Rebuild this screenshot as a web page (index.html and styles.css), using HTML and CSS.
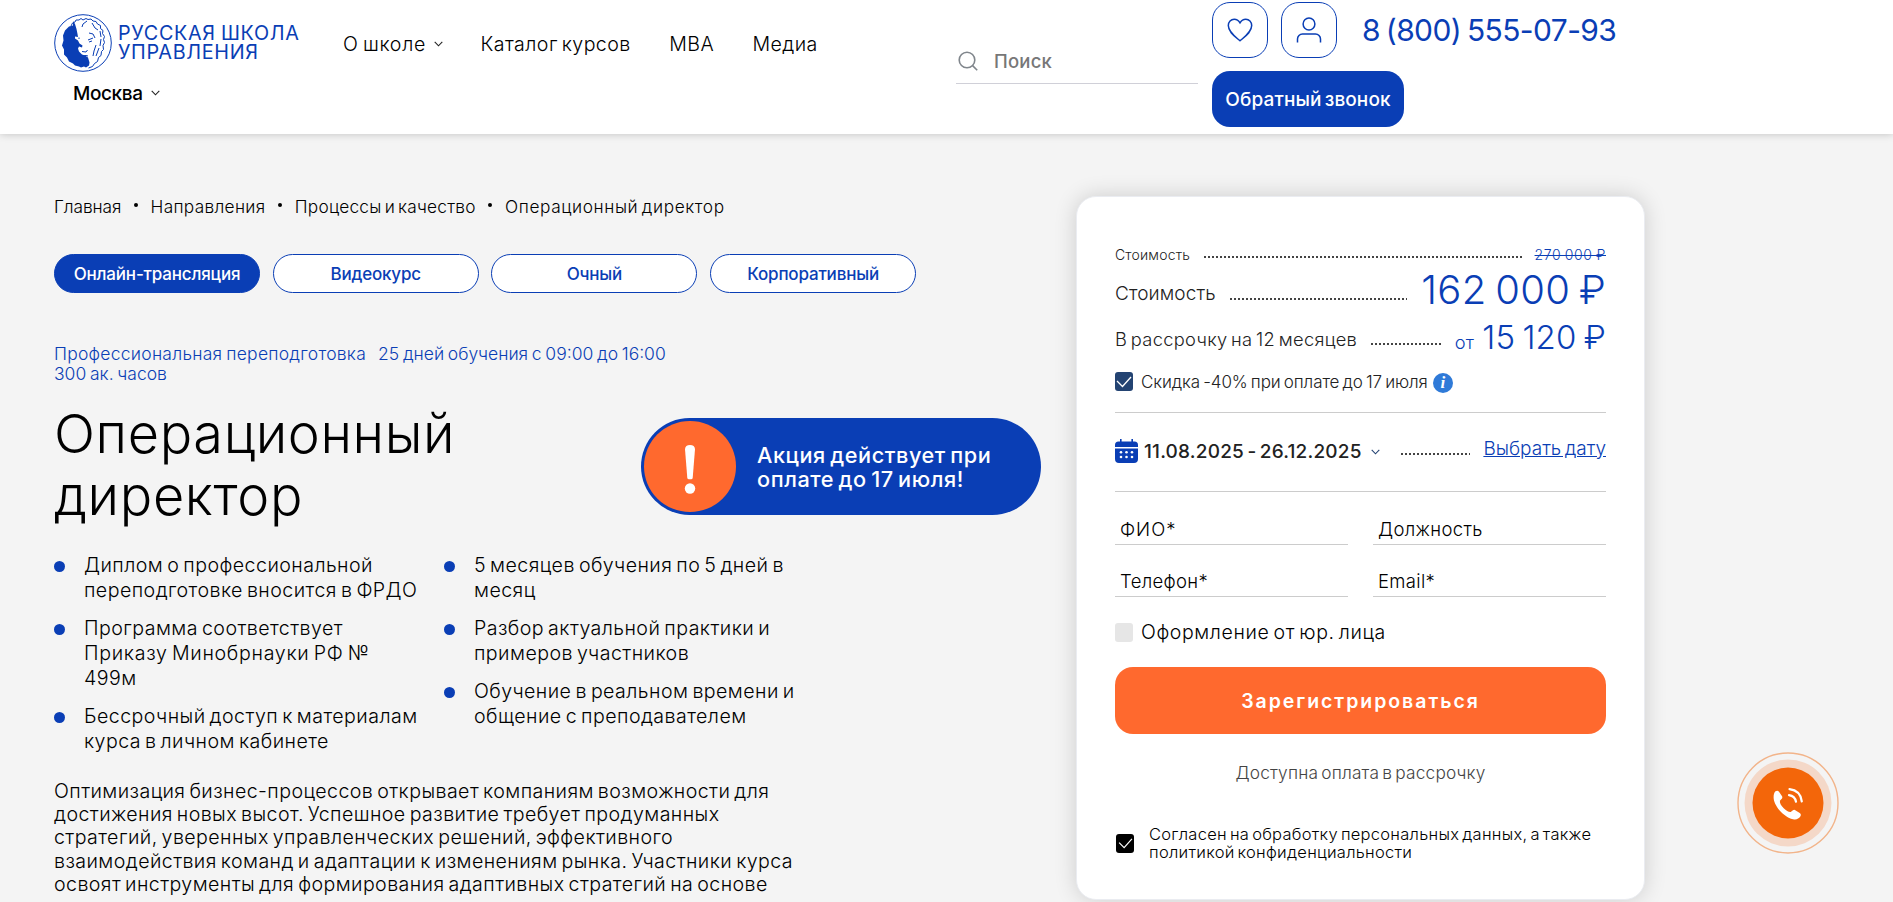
FILE: index.html
```html
<!DOCTYPE html>
<html lang="ru">
<head>
<meta charset="utf-8">
<title>Операционный директор</title>
<link rel="stylesheet" href="styles.css">
</head>
<body>
<header class="header">
  <div class="brand">
    <a class="logo">
      <svg class="logo-mark" viewBox="0 0 58 58" width="58" height="58">
        <circle cx="29" cy="29" r="28.3" fill="none" stroke="#0a3eb5" stroke-width="1"/>
        <path fill="#0a3eb5" d="M19 11.500l-4 1-4 4-2 5 .5 5-1.500 5 2 4 0 5 3 3 2 4 4 2 2 2 4 1 2 1 3-1 2 1 3-2 .5-3-1.500-5-3-2-3-1-3-3-1-3 1-2 3 1 .5-2-3-2-1.500-3-3-2 0-2 3 .5-.5-3-1-5-1.500-5-2-3z"/>
        <path fill="none" stroke="#0a3eb5" stroke-width="1" d="M17 12l1.500-3 2.500-1 1-2 3 0 2-1.500 2 1.500 3-1.500 2 1 3-.5 2 2 3 .5 1.500 2.500 3 1.500 0 3 2.500 2-.5 3 2 3-1 3 1 3-1.500 3 .5 4-2 2-.5 4-2.500 2-1 4-3 2-2 3-4 1.500M28 13l1-3 4-3M38 9l3 5 3 2M35 19l4 1 2 4M46 17l1 6M34 26l5-2M47 25l-1 7M35 28l3-1M28 37.500l4 .5 1.500-2M26 42l6-.5 2 .5M42 31l-2 6-1 5M45 34l-3 8M28 47l4-2M25 23.500v1.500"/>
      </svg>
      <span class="logo-text"><span class="ln">РУССКАЯ ШКОЛА</span><span class="ln">УПРАВЛЕНИЯ</span></span>
    </a>
    <div class="city"><span>Москва</span><svg class="chev" viewBox="0 0 9 6" width="9" height="6"><path d="M.7.8l3.800 4 3.800-4"/></svg></div>
  </div>
  <nav class="nav">
    <a><span>О школе</span><svg class="chev" viewBox="0 0 9 6" width="9" height="6"><path d="M.7.8l3.800 4 3.800-4"/></svg></a>
    <a>Каталог курсов</a>
    <a>MBA</a>
    <a>Медиа</a>
  </nav>
  <div class="search">
    <svg viewBox="0 0 20 20" width="20" height="20" fill="none" stroke="#80868c" stroke-width="1.600"><circle cx="9" cy="9" r="7.800"/><path d="M14.600 14.600l4.600 4.600"/></svg>
    <span>Поиск</span>
  </div>
  <div class="actions">
    <a class="sq"><svg viewBox="0 0 26 24" width="26" height="24"><path d="M13 22.800C8 18.500 1.300 14 1.300 7.600 1.300 3.800 4 1.200 7.200 1.200c2.500 0 4.300 1.100 5.800 3.600 1.500-2.500 3.300-3.600 5.800-3.600 3.200 0 5.900 2.600 5.900 6.400 0 6.400-6.700 10.900-11.700 15.200z"/></svg></a>
    <a class="sq"><svg viewBox="0 0 26 26" width="26" height="26"><circle cx="13" cy="7" r="5.900"/><path d="M1.500 25.500v-3.500a5 5 0 0 1 5-5h13a5 5 0 0 1 5 5v3.500"/></svg></a>
    <a class="phone">8 (800) 555-07-93</a>
    <a class="callback">Обратный звонок</a>
  </div>
</header>

<main class="main">
  <section class="info">
    <nav class="crumbs"><a>Главная</a><i></i><a class="wide">Направления</a><i></i><a class="mid">Процессы и качество</a><i></i><a class="wider">Операционный директор</a></nav>
    <div class="formats">
      <a class="pill active">Онлайн-трансляция</a>
      <a class="pill">Видеокурс</a>
      <a class="pill">Очный</a>
      <a class="pill">Корпоративный</a>
    </div>
    <div class="meta"><span class="kind">Профессиональная переподготовка</span><span>25 дней обучения с 09:00 до 16:00</span><span>300 ак. часов</span></div>
    <div class="headline">
      <h1><span class="ln">Операционный</span><span class="ln">директор</span></h1>
      <div class="promo">
        <div class="promo-icon"><svg viewBox="0 0 12 50" width="12" height="50" fill="#fff"><path d="M1 5.200C1 2.500 3 1 6 1s5 1.500 5 4.200L8.700 34c-.1 1-.8 1.200-2.700 1.200S3.400 35 3.300 34z"/><circle cx="6" cy="44.500" r="5.200"/></svg></div>
        <div class="promo-text"><span class="ln">Акция действует при</span><span class="ln">оплате до 17 июля!</span></div>
      </div>
    </div>
    <div class="benefits">
      <ul>
        <li><span class="ln">Диплом о профессиональной</span><span class="ln">переподготовке вносится в ФРДО</span></li>
        <li><span class="ln">Программа соответствует</span><span class="ln caps">Приказу Минобрнауки РФ №</span><span class="ln">499м</span></li>
        <li><span class="ln">Бессрочный доступ к материалам</span><span class="ln">курса в личном кабинете</span></li>
      </ul>
      <ul>
        <li><span class="ln">5 месяцев обучения по 5 дней в</span><span class="ln">месяц</span></li>
        <li><span class="ln">Разбор актуальной практики и</span><span class="ln">примеров участников</span></li>
        <li><span class="ln">Обучение в реальном времени и</span><span class="ln">общение с преподавателем</span></li>
      </ul>
    </div>
    <p class="about"><span class="ln">Оптимизация бизнес-процессов открывает компаниям возможности для</span><span class="ln">достижения новых высот. Успешное развитие требует продуманных</span><span class="ln">стратегий, уверенных управленческих решений, эффективного</span><span class="ln">взаимодействия команд и адаптации к изменениям рынка. Участники курса</span><span class="ln">освоят инструменты для формирования адаптивных стратегий на основе</span></p>
  </section>

  <form class="card">
    <div class="row row-old"><span>Стоимость</span><i class="leader"></i><s>270 000 ₽</s></div>
    <div class="row row-price"><span>Стоимость</span><i class="leader"></i><b>162 000 ₽</b></div>
    <div class="row row-split"><span>В рассрочку на 12 месяцев</span><i class="leader"></i><em>от</em><b>15 120 ₽</b></div>
    <div class="discount"><span class="box navy"><svg viewBox="0 0 16 12" width="16" height="12"><path d="M1 5l5.500 5.500L15 1"/></svg></span><span>Скидка -40% при оплате до 17 июля</span><span class="tip">i</span></div>
    <div class="row row-date">
      <svg viewBox="0 0 23 24" width="23" height="24"><path fill="#0a3eb5" d="M0 8V6a3.500 3.500 0 0 1 3.500-3.500H5V0h1.600v2.500h9.800V0H18v2.500h1.500A3.500 3.500 0 0 1 23 6v2zM0 9.500h23V20a4 4 0 0 1-4 4H4a4 4 0 0 1-4-4z"/><g fill="#fff"><circle cx="6" cy="13.300" r="1.300"/><circle cx="11.500" cy="13.300" r="1.300"/><circle cx="17" cy="13.300" r="1.300"/><circle cx="6" cy="18" r="1.300"/><circle cx="11.500" cy="18" r="1.300"/><circle cx="17" cy="18" r="1.300"/></g></svg>
      <strong>11.08.2025 - 26.12.2025</strong><svg class="chev navy-line" viewBox="0 0 9 6" width="9" height="6"><path d="M.7.8l3.800 4 3.800-4"/></svg><i class="leader"></i><a>Выбрать дату</a>
    </div>
    <div class="fields">
      <label class="caps">ФИО*</label><label>Должность</label>
      <label>Телефон*</label><label>Email*</label>
    </div>
    <div class="legal"><span class="box"></span><span>Оформление от юр. лица</span></div>
    <button class="submit" type="button">Зарегистрироваться</button>
    <div class="note">Доступна оплата в рассрочку</div>
    <div class="consent"><span class="box black"><svg viewBox="0 0 16 12" width="15" height="11"><path d="M1 5l5.500 5.500L15 1"/></svg></span><span><span class="ln">Согласен на обработку персональных данных, а также</span><span class="ln">политикой конфиденциальности</span></span></div>
  </form>
</main>

<a class="call">
  <svg viewBox="0 0 102 102" width="102" height="102"><circle cx="51" cy="51" r="50" fill="none" stroke="#f2b48a" stroke-width="1.400"/><circle cx="51" cy="51" r="43.500" fill="#f4d8c8"/><circle cx="51" cy="51" r="35.500" fill="#f3660a"/>
  <path fill="#fff" d="M38.500 39.300c1.300-.9 2.600-.7 3.500.5l2.900 4.200c.8 1.100.5 2.200-.4 3.100l-1.600 1.600c-.3 2.200 1.200 5 3.800 7.600 2.500 2.500 5 4 7 3.800l1.900-1.600c1-.8 2-.9 3.100-.1l4 2.700c1.400 1 1.500 2.200.6 3.500-1.600 2.300-4 3.400-7.300 2.600-10.200-2.600-19.400-14-19.400-22 0-2.700.6-4.600 1.900-5.900z"/><path fill="none" stroke="#fff" stroke-width="2.200" stroke-linecap="round" d="M52.500 37.200c7.500.9 11.500 5.500 12.300 12.300M52 43.200c4.200.6 6.300 3 7 6.500"/></svg>
</a>
</body>
</html>
```
FILE: styles.css
```css
* { box-sizing: border-box; }
body {
  margin: 0;
  width: 1893px;
  height: 902px;
  overflow: hidden;
  background: #f4f4f4;
  color: #000;
  font-family: Inter, "Noto Sans", sans-serif;
  font-size: 19px;
  font-weight: 300;
  word-spacing: -1.900px;
}
.ln { display: block; white-space: nowrap; }
span, a, b, s, strong, em { white-space: nowrap; }
.chev path { fill: none; stroke: #222; stroke-width: 1.100; }
.chev.navy-line path { stroke: #234372; }

.header {
  display: grid;
  grid-template-columns: 289px 613px 256px 1fr;
  height: 134px;
  padding-left: 54px;
  background: #fff;
  box-shadow: 0 0 8px rgba(0, 0, 0, .22);
  position: relative;
}
.brand { padding-top: 13.500px; }
.logo { display: flex; color: #0a3eb5; }
.logo-text { padding: 10.500px 0 0 6px; font-size: 19.800px; line-height: 19.400px; font-weight: 400; letter-spacing: .68px; word-spacing: -1px; }
.city { display: flex; align-items: center; gap: 8px; height: 24px; margin-top: 9.500px; padding-left: 19px; font-weight: 500; letter-spacing: -.4px; }
.nav { display: flex; gap: 38.500px; height: 24px; margin-top: 31.500px; font-size: 19.600px; line-height: 24px; letter-spacing: .42px; }
.nav a { display: flex; align-items: center; gap: 8px; }
.nav a:first-child span { letter-spacing: .7px; }
.nav a:first-child { margin-right: -1px; }
.search { display: flex; align-items: center; gap: 16px; width: 242px; height: 44px; margin-top: 40px; padding: 0 0 1px 2px; border-bottom: 1px solid #d0d0d8; color: #777; font-size: 18.500px; font-weight: 500; letter-spacing: .2px; }
.actions { display: flex; flex-wrap: wrap; gap: 13px; align-content: flex-start; padding-top: 2px; }
.sq { display: flex; align-items: center; justify-content: center; width: 56px; height: 56px; border: 1px solid #0a3eb5; border-radius: 18px; }
.sq svg { fill: none; stroke: #0a3eb5; stroke-width: 1.500; }
.phone { width: 400px; padding-left: 12px; color: #0a3eb5; font-size: 30px; line-height: 56px; font-weight: 400; letter-spacing: -.6px; word-spacing: -2px; }
.callback { width: 192px; height: 56px; border-radius: 18px; background: #0a3eb5; color: #fff; line-height: 57px; text-align: center; font-weight: 500; letter-spacing: .1px; }

.main { display: grid; grid-template-columns: 1022px 569px; padding: 62px 0 0 54px; align-items: start; }
.info { padding-top: 1px; }
.crumbs { display: flex; align-items: center; height: 20px; font-size: 17.300px; line-height: 20px; letter-spacing: -.1px; }
.crumbs i { width: 4px; height: 4px; margin: -4px 12.700px 0; border-radius: 50%; background: #000; }
.crumbs .wide { letter-spacing: .3px; }
.crumbs .mid { letter-spacing: .22px; }
.crumbs .wider { letter-spacing: .6px; }
.formats { display: grid; grid-template-columns: repeat(4, 206px); gap: 12.700px; margin-top: 37px; }
.pill { height: 39px; border: 1px solid #0a3eb5; border-radius: 20px; background: #fff; color: #0a3eb5; font-size: 17px; font-weight: 500; line-height: 38px; text-align: center; letter-spacing: -.18px; }
.pill.active { background: #0a3eb5; color: #fff; }
.meta { display: flex; flex-wrap: wrap; column-gap: 12px; width: 680px; margin-top: 51px; color: #0a3eb5; font-size: 17.500px; line-height: 20px; word-spacing: -1.200px; }
.meta .kind { letter-spacing: .25px; }
.headline { display: flex; justify-content: space-between; height: 125px; margin-top: 18.500px; padding-right: 35px; }
h1 { margin: 0; padding-top: .5px; font-size: 54px; font-weight: 300; line-height: 62.400px; letter-spacing: .63px; }
.promo { display: flex; width: 400px; height: 97px; margin-top: 15px; padding: 3px; border-radius: 49px; background: #0a3eb5; color: #fff; }
.promo-icon { display: flex; align-items: center; justify-content: center; width: 92px; height: 91px; padding-top: 5px; border-radius: 50%; background: #ff692e; }
.promo-text { padding: 22.500px 0 0 21px; font-size: 21.700px; font-weight: 500; line-height: 24px; letter-spacing: .56px; }
.benefits { display: grid; grid-template-columns: 390px 390px; margin-top: 25px; font-size: 19.600px; line-height: 25.200px; letter-spacing: .44px; }
ul { display: flex; flex-direction: column; gap: 12.600px; margin: 0; padding: 0; list-style: none; }
li { display: grid; grid-template-columns: 30px 1fr; }
li::before { content: ""; grid-row: 1 / span 3; width: 11px; height: 11px; margin-top: 8px; border-radius: 50%; background: #0a3eb5; }
li .ln { grid-column: 2; }
li .caps { letter-spacing: .7px; }
.about { margin: 25.500px 0 0; font-size: 19.600px; line-height: 23.400px; letter-spacing: .42px; }

.card { height: 704px; padding: 46px 38px 0; border: 1px solid #eaecf1; border-radius: 20px; background: #fff; box-shadow: 0 0 22px rgba(0, 0, 0, .16); color: #222; }
.row { display: flex; }
.leader { flex: 1; height: 2px; background: repeating-linear-gradient(90deg, #444 0 2px, transparent 2px 4px); }
.row-old { height: 24px; font-size: 14px; line-height: 24px; letter-spacing: .17px; }
.row-old .leader { margin: 13px 13px 0 14px; }
.row s { color: #0a3eb5; letter-spacing: .6px; word-spacing: -1px; }
.row-price { height: 48px; line-height: 54px; letter-spacing: .1px; }
.row-price .leader { margin: 31px 14px 0; }
.row b { color: #0a3eb5; font-weight: 300; letter-spacing: .33px; word-spacing: -3px; }
.row-price b { font-size: 40px; line-height: 46px; }
.row-split { height: 47px; font-size: 18.300px; line-height: 48px; letter-spacing: .33px; }
.row-split .leader { margin: 28px 14px 0; }
.row em { color: #0a3eb5; font-style: normal; margin-right: 8px; line-height: 54px; }
.row-split b { font-size: 33px; line-height: 44px; letter-spacing: .1px; word-spacing: -2px; }
.discount { display: flex; align-items: center; height: 58px; padding-bottom: 19px; font-size: 17px; letter-spacing: -.1px; word-spacing: -1.500px; }
.box { flex: none; display: flex; align-items: center; justify-content: center; width: 18px; height: 19px; margin-right: 8px; border-radius: 3px; background: #e6e6e6; }
.box path { fill: none; stroke: #fff; stroke-width: 1.300; }
.box.navy { background: #234372; }
.box.black { background: #000; margin-right: 15px; }
.tip { display: flex; align-items: center; justify-content: center; width: 20px; height: 20px; margin: 3px 0 0 5px; border-radius: 50%; background: #2f7ad8; color: #fff; font: italic bold 17px "Liberation Serif", serif; }
.row-date { align-items: flex-start; height: 80px; padding-top: 26px; margin-top: -8px; border: solid #ccc; border-width: 1px 0; }
.row-date strong { margin: 0 9px 0 6px; font-weight: 500; line-height: 26px; letter-spacing: .2px; }
.row-date .chev { margin-top: 10px; }
.row-date .leader { margin: 14px 13px 0 21px; }
.row-date a { color: #0a3eb5; text-decoration: underline; line-height: 20px; }
.fields { display: grid; grid-template-columns: 233px 233px; column-gap: 25px; color: #000; font-size: 18.500px; letter-spacing: .33px; }
.fields label { height: 52.500px; padding: 24.500px 5px 0; border-bottom: 1px solid #ccc; line-height: 24px; }
.fields .caps { letter-spacing: 1px; }
.legal { display: flex; align-items: center; height: 70px; color: #000; font-size: 19.500px; letter-spacing: .62px; }
.submit { display: block; width: 100%; height: 67px; border: 0; border-radius: 18px; background: #ff692e; color: #fff; font: 600 19.500px Inter, sans-serif; letter-spacing: 1.950px; }
.note { margin-top: 27px; color: #444; font-size: 17.300px; line-height: 24px; text-align: center; letter-spacing: .18px; }
.consent { display: flex; align-items: center; margin-top: 40px; padding-left: 1px; color: #000; font-size: 16.500px; line-height: 18px; letter-spacing: .27px; }
.call { position: fixed; left: 1737px; top: 752px; }
```
